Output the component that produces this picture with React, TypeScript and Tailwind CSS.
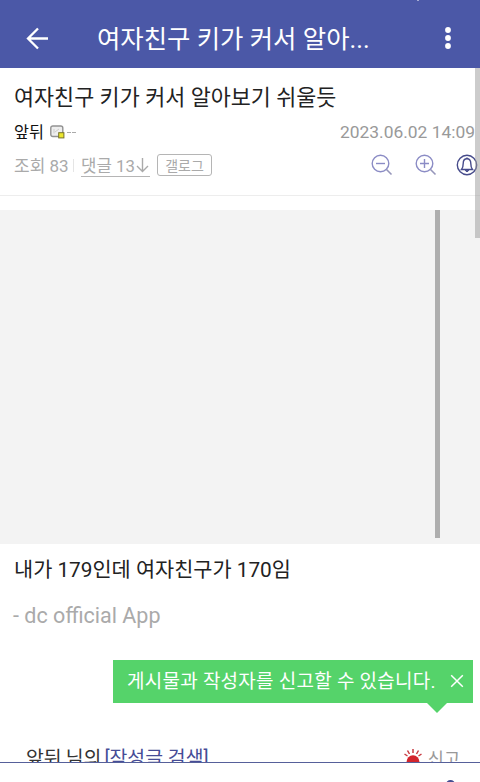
import React from "react";

function Header() {
  return (
    <header className="relative flex h-[68px] shrink-0 items-start bg-[#4b58a7] pt-[26px] text-white">
      <svg className="ml-[26px] mt-px h-[23px] w-[24px] shrink-0" viewBox="0 0 24 23" fill="none" stroke="currentColor" strokeWidth="2.3">
        <path d="M22 11.5H2.5M12 1.5L2 11.5L12 21.5" />
      </svg>
      <h1 className="ml-[47px] w-[289px] whitespace-nowrap text-[25.4px] leading-[26px]">여자친구 키가 커서 알아...</h1>
      <svg className="ml-[55px] h-[24px] w-[14px] shrink-0" viewBox="0 0 14 24" fill="currentColor">
        <circle cx="7" cy="4" r="2.9" />
        <circle cx="7" cy="12" r="2.9" />
        <circle cx="7" cy="20" r="2.9" />
      </svg>
      <span className="absolute left-[417px] top-0 h-px w-[2px] bg-[#a5acd3]" />
    </header>
  );
}

function Magnifier({ plus = false }: { plus?: boolean }) {
  return (
    <svg className="h-[22px] w-[22px]" viewBox="0 0 22 22" fill="none" stroke="#8b8cc5" strokeWidth="1.4">
      <circle cx="9.5" cy="9.5" r="8.3" />
      <path d="M15.5 15.5L20.5 20.5" stroke="#9696ba" strokeWidth="1.6" />
      <path d={plus ? "M5 9.5H14M9.5 5V14" : "M5 9.5H14"} />
    </svg>
  );
}

function Bell() {
  return (
    <svg className="h-[22px] w-[22px]" viewBox="0 0 22 22" fill="none" stroke="#464b8b" strokeWidth="1.4">
      <circle cx="11" cy="11" r="9.7" />
      <path d="M5.5 15.5H16.5C15 13.8 14.8 12 14.8 9.5C14.8 6.4 13.4 4.8 11 4.8S7.2 6.4 7.2 9.5C7.2 12 7 13.8 5.5 15.5Z" />
      <path d="M11 3.5V5" />
      <path d="M9.2 16.2Q11 19.3 12.8 16.2Z" fill="#464b8b" strokeWidth="1" />
    </svg>
  );
}

function FixedBadge() {
  return (
    <svg className="h-[14px] w-[15px]" viewBox="0 0 15 14">
      <rect x="0.8" y="1" width="12" height="10.5" rx="2" fill="#eeeeee" stroke="#929292" strokeWidth="1.4" />
      <path d="M4 8.5V4M5 7L9 4" stroke="#cccccc" />
      <rect x="8.7" y="7.7" width="5.2" height="5.2" fill="#ebe72e" stroke="#77722a" strokeWidth="1" />
    </svg>
  );
}

function PostInfo() {
  return (
    <section className="flex h-[128px] shrink-0 flex-col border-b border-[#ededed]">
      <h2 className="ml-[14px] mt-[15px] h-[30px] whitespace-nowrap text-[21.8px] leading-[30px] text-[#222]">여자친구 키가 커서 알아보기 쉬울듯</h2>
      <div className="mt-[8px] flex h-[22px] items-center pl-[14px] pr-[5px]">
        <span className="w-[36px] whitespace-nowrap pt-[2px] text-[16.3px] leading-[22px] text-[#111]">앞뒤</span>
        <FixedBadge />
        <span className="ml-[2px] flex gap-px pt-px"><i className="h-px w-[4px] bg-[#aaa]" /><i className="h-px w-[4px] bg-[#aaa]" /></span>
        <time className="ml-auto whitespace-nowrap text-[17.4px] leading-[22px] text-[#999]">2023.06.02 14:09</time>
      </div>
      <div className="mt-[10px] flex h-[24px] items-center pl-[14px] pr-[2px] text-[17px] text-[#aaa]">
        <span className="w-[59px] whitespace-nowrap pt-[3px]">조회 83</span>
        <span className="h-[13px] w-px bg-[#e5e5e5]" />
        <span className="ml-[7px] flex h-[24px] w-[69px] items-center border-b border-[#b5b5b5]">
          <span className="w-[55px] whitespace-nowrap pt-[4px] text-[16.8px]">댓글 13</span>
          <svg className="mt-[2px] h-[15px] w-[13px]" viewBox="0 0 13 15" fill="none" stroke="currentColor" strokeWidth="1.4"><path d="M6.5 0V13.5M1 8L6.5 13.5L12 8" /></svg>
        </span>
        <span className="ml-[7px] flex h-[22px] w-[55px] items-center justify-center rounded-[3px] border border-[#b5b5b5] pt-px text-[14px] leading-[20px]">갤로그</span>
        <span className="ml-auto flex items-center">
          <Magnifier />
          <span className="ml-[22px] flex"><Magnifier plus /></span>
          <span className="ml-[19px] flex"><Bell /></span>
        </span>
      </div>
    </section>
  );
}

function ReportNotice() {
  return (
    <div className="relative ml-[113px] mt-[29px] flex h-[43px] w-[360px] items-center bg-[#55d36a] pl-[14px] text-white">
      <span className="w-[323px] whitespace-nowrap pt-[3px] text-[19px] tracking-[0.25px]">게시물과 작성자를 신고할 수 있습니다.</span>
      <svg className="h-[14px] w-[14px]" viewBox="0 0 14 14" stroke="currentColor" strokeWidth="1.5"><path d="M1.2 1.2L12.8 12.8M12.8 1.2L1.2 12.8" /></svg>
      <svg className="absolute left-[313px] top-[42px] h-[12px] w-[22px]" viewBox="0 0 22 12"><path d="M0 0H22L11 11Z" fill="#55d36a" /></svg>
    </div>
  );
}

function AuthorRow() {
  return (
    <div className="mt-auto h-[17px] shrink-0 overflow-hidden">
      <div className="flex h-[28px] items-start pl-[26px] text-[19.4px] leading-[28px]">
        <span className="whitespace-nowrap text-[#333]">앞뒤</span>
        <span className="ml-[4px] whitespace-nowrap text-[#333]">님의</span>
        <span className="ml-[3px] whitespace-nowrap text-[#464c96]">[작성글 검색]</span>
        <svg className="ml-auto mt-[3px] h-[18px] w-[18px]" viewBox="0 0 18 18" fill="none">
          <path d="M2.5 18V14A6.5 6.8 0 0 1 15.5 14V18Z" fill="#d3252d" />
          <path d="M9 1V5M3.5 2.5L5.5 6M14.5 2.5L12.5 6M0.5 6L3.5 8M17.5 6L14.5 8" stroke="#c83b42" strokeWidth="1.5" />
        </svg>
        <span className="ml-[6px] mr-[20px] text-[17.5px] text-[#999]">신고</span>
      </div>
    </div>
  );
}

export default function App() {
  return (
    <div className="flex h-[782px] w-[480px] flex-col overflow-hidden bg-white font-['Roboto','Noto_Sans_CJK_KR',sans-serif]">
      <Header />
      <div className="relative flex h-[694px] shrink-0 flex-col overflow-hidden">
        <PostInfo />
        <div className="mt-[14px] flex h-[333.5px] shrink-0 bg-[#f3f3f3] pl-[435px]">
          <div className="h-[328px] w-[5px] bg-[#aeaeae]" />
        </div>
        <p className="ml-[14px] mt-[11px] h-[30px] whitespace-nowrap text-[20.8px] leading-[30px] text-[#222]">내가 179인데 여자친구가 170임</p>
        <p className="ml-[13px] mt-[16px] h-[30px] whitespace-nowrap text-[21.5px] leading-[30px] text-[#aaa]">- dc official App</p>
        <ReportNotice />
        <AuthorRow />
        <div className="absolute right-0 top-0 h-[170px] w-[5px] bg-[#999]/50" />
      </div>
      <footer className="relative h-[20px] shrink-0 overflow-hidden border-t-[1.5px] border-[#56609a] bg-white">
        <span className="absolute left-[446px] top-[17px] h-[9px] w-[9px] rounded-full bg-[#454d91]" />
      </footer>
    </div>
  );
}
